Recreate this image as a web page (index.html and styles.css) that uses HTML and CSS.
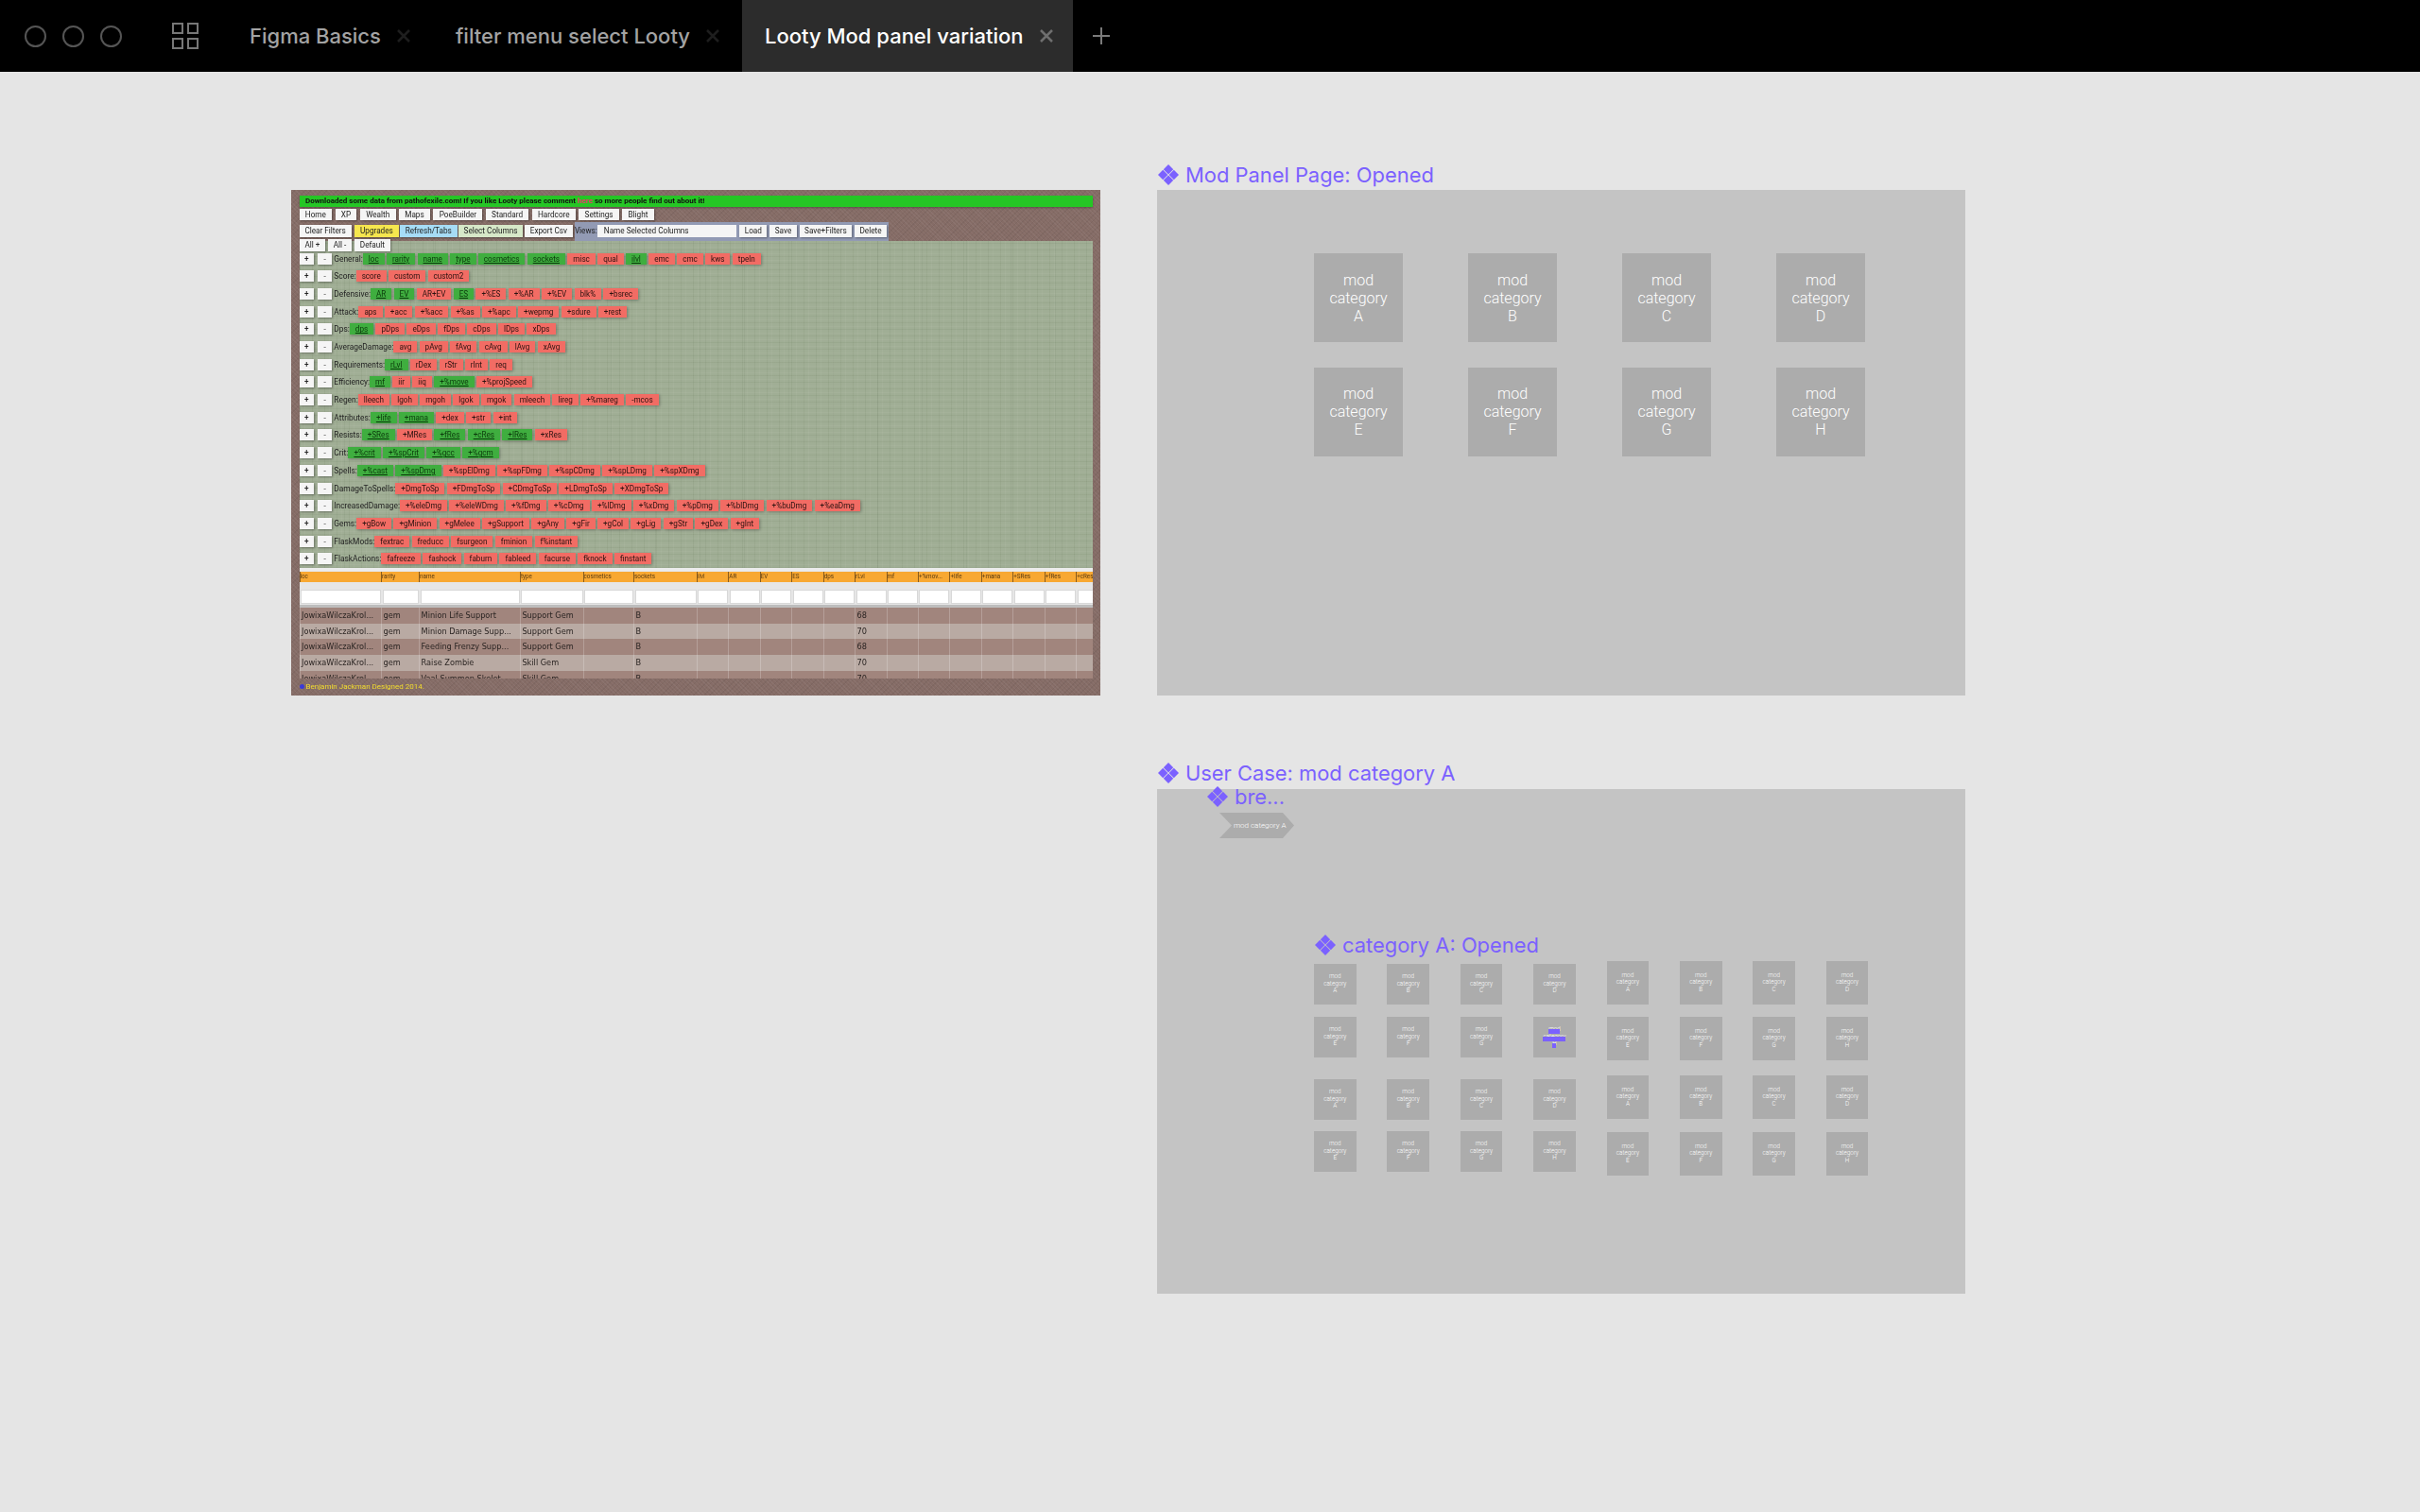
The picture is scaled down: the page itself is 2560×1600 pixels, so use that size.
FILE: index.html
```html
<!DOCTYPE html>
<html lang="en">
<head>
    <meta charset="utf-8">
    <title>Looty Mod panel variation</title>
    <link rel="stylesheet" href="styles.css">
</head>
<body>
    <svg class="defs" width="0" height="0">
        <symbol id="component" viewBox="0 0 22 22">
            <polygon points="11,0 16.2,5.2 11,10.4 5.8,5.2"/>
            <polygon points="11,11.6 16.2,16.8 11,22 5.8,16.8"/>
            <polygon points="5.2,5.8 10.4,11 5.2,16.2 0,11"/>
            <polygon points="16.8,5.8 22,11 16.8,16.2 11.6,11"/>
        </symbol>
    </svg>

    <header class="topbar">
        <div class="lights"><i></i><i></i><i></i></div>
        <div class="grid-icon"><i></i><i></i><i></i><i></i></div>
        <div class="tab">Figma Basics
            <svg class="close" viewBox="0 0 16 16"><path d="M2 2 14 14M14 2 2 14"/></svg>
        </div>
        <div class="tab">filter menu select Looty
            <svg class="close" viewBox="0 0 16 16"><path d="M2 2 14 14M14 2 2 14"/></svg>
        </div>
        <div class="tab active">Looty Mod panel variation
            <svg class="close" viewBox="0 0 16 16"><path d="M2 2 14 14M14 2 2 14"/></svg>
        </div>
        <svg class="plus" viewBox="0 0 18 18"><path d="M9 0V18M0 9H18"/></svg>
    </header>

    <main class="canvas">

        <!-- pasted screenshot of the Looty page -->
        <section class="looty">
            <div class="banner">Downloaded some data from pathofexile.com! If you like Looty please comment <span class="here">here</span> so more people find out about it!</div>
            <div class="btn-row nav-row">
                <span class="btn">Home</span><span class="btn">XP</span><span class="btn">Wealth</span><span class="btn">Maps</span><span class="btn">PoeBuilder</span><span class="btn">Standard</span><span class="btn">Hardcore</span><span class="btn">Settings</span><span class="btn">Blight</span>
            </div>
            <div class="btn-row tool-row">
                <span class="btn">Clear Filters</span>
                <span class="btn yellow">Upgrades</span>
                <span class="btn blue">Refresh/Tabs</span>
                <span class="btn pale">Select Columns</span>
                <span class="btn export">Export Csv</span>
                <div class="views">
                    <span class="views-label">Views:</span>
                    <span class="views-input">Name Selected Columns</span>
                    <span class="btn">Load</span><span class="btn">Save</span><span class="btn">Save+Filters</span><span class="btn">Delete</span>
                </div>
            </div>

            <div class="filters">
                <div class="btn-row all-row">
                    <span class="btn">All +</span><span class="btn">All -</span><span class="btn">Default</span>
                </div>
                <div class="filter-row"><span class="btn pm">+</span><span class="btn pm minus">-</span><span class="filter-label">General:</span><span class="tag on">loc</span><span class="tag on">rarity</span><span class="tag on">name</span><span class="tag on">type</span><span class="tag on">cosmetics</span><span class="tag on">sockets</span><span class="tag">misc</span><span class="tag">qual</span><span class="tag on">ilvl</span><span class="tag">emc</span><span class="tag">cmc</span><span class="tag">kws</span><span class="tag">tpeln</span></div>
                <div class="filter-row"><span class="btn pm">+</span><span class="btn pm minus">-</span><span class="filter-label">Score:</span><span class="tag">score</span><span class="tag">custom</span><span class="tag">custom2</span></div>
                <div class="filter-row"><span class="btn pm">+</span><span class="btn pm minus">-</span><span class="filter-label">Defensive:</span><span class="tag on">AR</span><span class="tag on">EV</span><span class="tag">AR+EV</span><span class="tag on">ES</span><span class="tag">+%ES</span><span class="tag">+%AR</span><span class="tag">+%EV</span><span class="tag">blk%</span><span class="tag">+bsrec</span></div>
                <div class="filter-row"><span class="btn pm">+</span><span class="btn pm minus">-</span><span class="filter-label">Attack:</span><span class="tag">aps</span><span class="tag">+acc</span><span class="tag">+%acc</span><span class="tag">+%as</span><span class="tag">+%apc</span><span class="tag">+wepmg</span><span class="tag">+sdure</span><span class="tag">+rest</span></div>
                <div class="filter-row"><span class="btn pm">+</span><span class="btn pm minus">-</span><span class="filter-label">Dps:</span><span class="tag on">dps</span><span class="tag">pDps</span><span class="tag">eDps</span><span class="tag">fDps</span><span class="tag">cDps</span><span class="tag">lDps</span><span class="tag">xDps</span></div>
                <div class="filter-row"><span class="btn pm">+</span><span class="btn pm minus">-</span><span class="filter-label">AverageDamage:</span><span class="tag">avg</span><span class="tag">pAvg</span><span class="tag">fAvg</span><span class="tag">cAvg</span><span class="tag">lAvg</span><span class="tag">xAvg</span></div>
                <div class="filter-row"><span class="btn pm">+</span><span class="btn pm minus">-</span><span class="filter-label">Requirements:</span><span class="tag on">rLvl</span><span class="tag">rDex</span><span class="tag">rStr</span><span class="tag">rInt</span><span class="tag">req</span></div>
                <div class="filter-row"><span class="btn pm">+</span><span class="btn pm minus">-</span><span class="filter-label">Efficiency:</span><span class="tag on">mf</span><span class="tag">iir</span><span class="tag">iiq</span><span class="tag on">+%move</span><span class="tag">+%projSpeed</span></div>
                <div class="filter-row"><span class="btn pm">+</span><span class="btn pm minus">-</span><span class="filter-label">Regen:</span><span class="tag">lleech</span><span class="tag">lgoh</span><span class="tag">mgoh</span><span class="tag">lgok</span><span class="tag">mgok</span><span class="tag">mleech</span><span class="tag">lireg</span><span class="tag">+%mareg</span><span class="tag">-mcos</span></div>
                <div class="filter-row"><span class="btn pm">+</span><span class="btn pm minus">-</span><span class="filter-label">Attributes:</span><span class="tag on">+life</span><span class="tag on">+mana</span><span class="tag">+dex</span><span class="tag">+str</span><span class="tag">+int</span></div>
                <div class="filter-row"><span class="btn pm">+</span><span class="btn pm minus">-</span><span class="filter-label">Resists:</span><span class="tag on">+SRes</span><span class="tag">+MRes</span><span class="tag on">+fRes</span><span class="tag on">+cRes</span><span class="tag on">+lRes</span><span class="tag">+xRes</span></div>
                <div class="filter-row"><span class="btn pm">+</span><span class="btn pm minus">-</span><span class="filter-label">Crit:</span><span class="tag on">+%crit</span><span class="tag on">+%spCrit</span><span class="tag on">+%gcc</span><span class="tag on">+%gcm</span></div>
                <div class="filter-row"><span class="btn pm">+</span><span class="btn pm minus">-</span><span class="filter-label">Spells:</span><span class="tag on">+%cast</span><span class="tag on">+%spDmg</span><span class="tag">+%spElDmg</span><span class="tag">+%spFDmg</span><span class="tag">+%spCDmg</span><span class="tag">+%spLDmg</span><span class="tag">+%spXDmg</span></div>
                <div class="filter-row"><span class="btn pm">+</span><span class="btn pm minus">-</span><span class="filter-label">DamageToSpells:</span><span class="tag">+DmgToSp</span><span class="tag">+FDmgToSp</span><span class="tag">+CDmgToSp</span><span class="tag">+LDmgToSp</span><span class="tag">+XDmgToSp</span></div>
                <div class="filter-row"><span class="btn pm">+</span><span class="btn pm minus">-</span><span class="filter-label">IncreasedDamage:</span><span class="tag">+%eleDmg</span><span class="tag">+%eleWDmg</span><span class="tag">+%fDmg</span><span class="tag">+%cDmg</span><span class="tag">+%lDmg</span><span class="tag">+%xDmg</span><span class="tag">+%pDmg</span><span class="tag">+%blDmg</span><span class="tag">+%buDmg</span><span class="tag">+%eaDmg</span></div>
                <div class="filter-row"><span class="btn pm">+</span><span class="btn pm minus">-</span><span class="filter-label">Gems:</span><span class="tag">+gBow</span><span class="tag">+gMinion</span><span class="tag">+gMelee</span><span class="tag">+gSupport</span><span class="tag">+gAny</span><span class="tag">+gFir</span><span class="tag">+gCol</span><span class="tag">+gLig</span><span class="tag">+gStr</span><span class="tag">+gDex</span><span class="tag">+gInt</span></div>
                <div class="filter-row"><span class="btn pm">+</span><span class="btn pm minus">-</span><span class="filter-label">FlaskMods:</span><span class="tag">fextrac</span><span class="tag">freducc</span><span class="tag">fsurgeon</span><span class="tag">fminion</span><span class="tag">f%instant</span></div>
                <div class="filter-row"><span class="btn pm">+</span><span class="btn pm minus">-</span><span class="filter-label">FlaskActions:</span><span class="tag">fafreeze</span><span class="tag">fashock</span><span class="tag">faburn</span><span class="tag">fableed</span><span class="tag">facurse</span><span class="tag">fknock</span><span class="tag">finstant</span></div>
            </div>

            <div class="table">
                <div class="cols head">
                    <span>loc</span><span>rarity</span><span>name</span><span>type</span><span>cosmetics</span><span>sockets</span><span>ilvl</span><span>AR</span><span>EV</span><span>ES</span><span>dps</span><span>rLvl</span><span>mf</span><span>+%mov...</span><span>+life</span><span>+mana</span><span>+SRes</span><span>+fRes</span><span>+cRes</span>
                </div>
                <div class="cols inputs">
                    <span></span><span></span><span></span><span></span><span></span><span></span><span></span><span></span><span></span><span></span><span></span><span></span><span></span><span></span><span></span><span></span><span></span><span></span><span></span>
                </div>
                <div class="cols item">
                    <span>JowixaWilczaKrol...</span><span>gem</span><span>Minion Life Support</span><span>Support Gem</span><span></span><span>B</span><span></span><span></span><span></span><span></span><span></span><span>68</span><span></span><span></span><span></span><span></span><span></span><span></span><span></span>
                </div>
                <div class="cols item">
                    <span>JowixaWilczaKrol...</span><span>gem</span><span>Minion Damage Supp...</span><span>Support Gem</span><span></span><span>B</span><span></span><span></span><span></span><span></span><span></span><span>70</span><span></span><span></span><span></span><span></span><span></span><span></span><span></span>
                </div>
                <div class="cols item">
                    <span>JowixaWilczaKrol...</span><span>gem</span><span>Feeding Frenzy Supp...</span><span>Support Gem</span><span></span><span>B</span><span></span><span></span><span></span><span></span><span></span><span>68</span><span></span><span></span><span></span><span></span><span></span><span></span><span></span>
                </div>
                <div class="cols item">
                    <span>JowixaWilczaKrol...</span><span>gem</span><span>Raise Zombie</span><span>Skill Gem</span><span></span><span>B</span><span></span><span></span><span></span><span></span><span></span><span>70</span><span></span><span></span><span></span><span></span><span></span><span></span><span></span>
                </div>
                <div class="cols item">
                    <span>JowixaWilczaKrol...</span><span>gem</span><span>Vaal Summon Skelet...</span><span>Skill Gem</span><span></span><span>B</span><span></span><span></span><span></span><span></span><span></span><span>70</span><span></span><span></span><span></span><span></span><span></span><span></span><span></span>
                </div>
            </div>
            <div class="credit"><i class="credit-dot"></i>Benjamin Jackman Designed 2014.</div>
        </section>

        <!-- frame 1 -->
        <h3 class="frame-name name-opened"><svg class="comp"><use href="#component"/></svg>Mod Panel Page: Opened</h3>
        <section class="frame frame-opened">
            <div class="big-grid">
                <div class="tile">mod<br>category<br>A</div>
                <div class="tile">mod<br>category<br>B</div>
                <div class="tile">mod<br>category<br>C</div>
                <div class="tile">mod<br>category<br>D</div>
                <div class="tile">mod<br>category<br>E</div>
                <div class="tile">mod<br>category<br>F</div>
                <div class="tile">mod<br>category<br>G</div>
                <div class="tile">mod<br>category<br>H</div>
            </div>
        </section>

        <!-- frame 2 -->
        <h3 class="frame-name name-case"><svg class="comp"><use href="#component"/></svg>User Case: mod category A</h3>
        <section class="frame frame-case">
            <h3 class="frame-name name-bread"><svg class="comp"><use href="#component"/></svg>bre...</h3>
            <div class="chevron">mod category A</div>
            <h3 class="frame-name name-cat"><svg class="comp"><use href="#component"/></svg>category A: Opened</h3>
            <div class="small-sets">
                <div class="small-set set-left">
                    <div class="small-row">
                        <div class="mini">mod<br>category<br>A</div><div class="mini">mod<br>category<br>B</div><div class="mini">mod<br>category<br>C</div><div class="mini">mod<br>category<br>D</div>
                    </div>
                    <div class="small-row">
                        <div class="mini">mod<br>category<br>E</div><div class="mini">mod<br>category<br>F</div><div class="mini">mod<br>category<br>G</div>
                        <div class="mini picked">mod<br>category<br>H
                            <div class="picked-bars"><i class="bar-a"></i><i class="bar-b"></i><i class="bar-c"></i></div>
                        </div>
                    </div>
                    <div class="small-row">
                        <div class="mini">mod<br>category<br>A</div><div class="mini">mod<br>category<br>B</div><div class="mini">mod<br>category<br>C</div><div class="mini">mod<br>category<br>D</div>
                    </div>
                    <div class="small-row">
                        <div class="mini">mod<br>category<br>E</div><div class="mini">mod<br>category<br>F</div><div class="mini">mod<br>category<br>G</div><div class="mini">mod<br>category<br>H</div>
                    </div>
                </div>
                <div class="small-set set-right">
                    <div class="small-row">
                        <div class="mini">mod<br>category<br>A</div><div class="mini">mod<br>category<br>B</div><div class="mini">mod<br>category<br>C</div><div class="mini">mod<br>category<br>D</div>
                    </div>
                    <div class="small-row">
                        <div class="mini">mod<br>category<br>E</div><div class="mini">mod<br>category<br>F</div><div class="mini">mod<br>category<br>G</div><div class="mini">mod<br>category<br>H</div>
                    </div>
                    <div class="small-row">
                        <div class="mini">mod<br>category<br>A</div><div class="mini">mod<br>category<br>B</div><div class="mini">mod<br>category<br>C</div><div class="mini">mod<br>category<br>D</div>
                    </div>
                    <div class="small-row">
                        <div class="mini">mod<br>category<br>E</div><div class="mini">mod<br>category<br>F</div><div class="mini">mod<br>category<br>G</div><div class="mini">mod<br>category<br>H</div>
                    </div>
                </div>
            </div>
        </section>
    </main>
</body>
</html>
```

FILE: styles.css
```css
* {
    box-sizing: border-box;
}
body {
    margin: 0;
    height: 1600px;
    overflow: hidden;
    background-color: #e5e5e5;
    font-family: Inter, "Liberation Sans", sans-serif;
}
.defs {
    position: absolute;
}

/* Top bar */
.topbar {
    display: flex;
    align-items: stretch;
    height: 76px;
    background-color: #000;
    font-size: 22px;
    font-weight: 500;
    color: #a3a3a3;
}
.lights {
    display: flex;
    align-items: center;
    gap: 17px;
    margin-left: 26px;
}
.lights i {
    width: 23px;
    height: 23px;
    border: 2px solid #555;
    border-radius: 50%;
}
.grid-icon {
    display: grid;
    grid-template-columns: 12px 12px;
    grid-auto-rows: 12px;
    gap: 4px;
    align-self: center;
    margin-left: 53px;
    margin-right: 30px;
}
.grid-icon i {
    border: 2px solid #777;
}
.tab {
    display: flex;
    align-items: center;
    padding: 0 23px 0 24px;
    white-space: nowrap;
}
.tab.active {
    padding-right: 20px;
    background-color: #2c2c2c;
    color: #fff;
}
.close {
    width: 16px;
    height: 16px;
    margin-left: 16px;
    fill: none;
    stroke: #1e1e1e;
    stroke-width: 2.5;
}
.tab.active .close {
    stroke: #6f6f6f;
}
.plus {
    align-self: center;
    width: 18px;
    height: 18px;
    margin-left: 21px;
    fill: none;
    stroke: #7a7a7a;
    stroke-width: 2;
}

/* Free canvas */
.canvas {
    position: relative;
    height: 1524px;
}
.frame {
    position: absolute;
    left: 1224px;
    width: 855px;
    background-color: #c4c4c4;
}
.frame-opened {
    top: 125px;
    height: 535px;
    padding: 67px 0 0 166px;
}
.frame-case {
    top: 759px;
    height: 534px;
}
.frame-name {
    position: absolute;
    display: flex;
    align-items: center;
    gap: 7px;
    height: 30px;
    margin: 0;
    font-size: 21.9px;
    font-weight: 400;
    line-height: 30px;
    color: #7b61ff;
    white-space: nowrap;
}
.comp {
    width: 22px;
    height: 22px;
    fill: #7b61ff;
}
.name-opened {
    top: 94px;
    left: 1225px;
}
.name-case {
    top: 727px;
    left: 1225px;
}
.name-bread {
    top: -7px;
    left: 53px;
}
.name-cat {
    top: 150px;
    left: 167px;
}
.big-grid {
    display: grid;
    grid-template-columns: repeat(4, 94px);
    grid-auto-rows: 94px;
    column-gap: 69px;
    row-gap: 26.5px;
}
.tile {
    display: flex;
    align-items: center;
    justify-content: center;
    text-align: center;
    background-color: #acacac;
    font-family: Roboto, sans-serif;
    font-size: 16px;
    font-weight: 300;
    line-height: 19px;
    color: #fff;
}
.chevron {
    position: absolute;
    top: 25px;
    left: 66px;
    width: 79px;
    height: 27px;
    padding-left: 15px;
    background-color: #acacac;
    clip-path: polygon(0 0, 67px 0, 100% 50%, 67px 100%, 0 100%, 13px 50%);
    font-family: Roboto, sans-serif;
    font-size: 8px;
    font-weight: 300;
    line-height: 27px;
    color: #fff;
    white-space: nowrap;
}

/* Small tiles */
.small-sets {
    position: absolute;
    top: 182px;
    left: 166px;
    display: flex;
    gap: 32.8px;
}
.small-set {
    display: flex;
    flex-direction: column;
}
.small-row {
    display: flex;
    gap: 32.8px;
}
.set-left {
    padding-top: 3px;
}
.set-left .small-row:nth-child(2) { margin-top: 13px; }
.set-left .small-row:nth-child(3) { margin-top: 23px; }
.set-left .small-row:nth-child(4) { margin-top: 12px; }
.set-right .small-row:nth-child(2) { margin-top: 13px; }
.set-right .small-row:nth-child(3) { margin-top: 16px; }
.set-right .small-row:nth-child(4) { margin-top: 14px; }
.mini {
    position: relative;
    display: flex;
    align-items: center;
    justify-content: center;
    width: 44.6px;
    height: 43px;
    text-align: center;
    background-color: #acacac;
    font-family: Roboto, sans-serif;
    font-size: 6.3px;
    font-weight: 300;
    line-height: 7.4px;
    color: #fff;
}
.set-right .mini {
    height: 46px;
}
.picked-bars {
    position: absolute;
    top: 13px;
    left: 0;
    right: 0;
    display: flex;
    flex-direction: column;
    align-items: center;
}
.picked-bars i {
    height: 5px;
    background-color: #7b61ff;
}
.bar-a { width: 12px; }
.bar-b { width: 24px; margin-top: 3px; }
.bar-c { width: 4px; margin-top: 2px; }

/* Looty screenshot */
.looty {
    position: absolute;
    top: 125px;
    left: 308px;
    width: 856px;
    height: 535px;
    padding: 6px 8.5px 0;
    overflow: hidden;
    background-color: #856c66;
    background-image:
        repeating-linear-gradient(45deg, rgba(255, 255, 255, .05) 0 1px, transparent 1px 3px),
        repeating-linear-gradient(-45deg, rgba(0, 0, 0, .05) 0 1px, transparent 1px 4px);
    font-family: Roboto, sans-serif;
    font-size: 8.2px;
    color: #222;
    filter: blur(.4px);
}
.banner {
    height: 12px;
    padding-left: 6.5px;
    background-color: #25c625;
    box-shadow: 0 1px 2px rgba(0, 0, 0, .3);
    font-size: 8px;
    font-weight: 700;
    line-height: 12px;
    color: #111;
    white-space: nowrap;
}
.here {
    color: #f0346c;
}
.btn-row {
    display: flex;
    gap: 3.4px;
}
.nav-row {
    margin-top: 2px;
}
.nav-row .btn {
    padding: 0 6.3px;
}
.tool-row {
    margin-top: 5px;
    height: 16.4px;
}
.btn {
    display: block;
    height: 12.3px;
    padding: 0 5.9px;
    background-color: #f5f5f5;
    box-shadow: 1px 1px 2px rgba(0, 0, 0, .35);
    line-height: 12.3px;
    white-space: nowrap;
}
.yellow { background-color: #f6e64e; }
.blue { background-color: #a6dcf6; margin-left: -2.3px; }
.pale { background-color: #d6e8c8; margin-left: -2.4px; }
.export { margin-left: -1.9px; }
.views {
    display: flex;
    gap: 3.2px;
    height: 19.3px;
    margin: -3px 0 0 -1.4px;
    padding: 3px 1.7px 0 0;
    background-color: #929ab4;
}
.views .btn {
    padding: 0 5.3px;
}
.views-label {
    margin-right: -3.2px;
    line-height: 12.3px;
}
.views-input {
    width: 147.5px;
    height: 12.3px;
    padding-left: 7px;
    background-color: #f5f5f5;
    line-height: 12.3px;
}
.filters {
    height: 346.3px;
    background-color: #a0ae95;
    background-image:
        repeating-linear-gradient(0deg, rgba(60, 80, 50, .07) 0 1px, transparent 1px 3px, rgba(255, 255, 255, .04) 3px 4px, transparent 4px 7px),
        repeating-linear-gradient(90deg, rgba(60, 80, 50, .07) 0 1px, transparent 1px 5px, rgba(255, 255, 255, .04) 5px 6px, transparent 6px 13px),
        repeating-linear-gradient(90deg, rgba(50, 70, 40, .06) 0 1px, transparent 1px 47px);
}
.all-row {
    position: relative;
    top: -1.4px;
    height: 12.3px;
    gap: 2.6px;
}
.filter-row {
    display: flex;
    align-items: flex-start;
    height: 12px;
    white-space: nowrap;
}
.all-row + .filter-row {
    margin-top: .6px;
}
.filter-row + .filter-row {
    margin-top: 6.7px;
}
.pm {
    width: 15.6px;
    height: 12px;
    padding: 0;
    text-align: center;
    font-weight: 500;
}
.minus {
    margin-left: 3.8px;
    color: #777;
}
.filter-label {
    margin-left: 1.8px;
    font-size: 8.4px;
    line-height: 12px;
}
.tag {
    height: 12px;
    margin-right: 2.3px;
    padding: 0 6px;
    background-color: #f26c64;
    box-shadow: 1px 1px 3px rgba(0, 0, 0, .3);
    font-size: 8.15px;
    line-height: 12px;
    color: #2b1210;
}
.tag.on {
    background-color: #3fae3f;
    color: #0c3a0c;
    text-decoration: underline;
}

/* Looty table */
.table {
    height: 117px;
    padding-top: 4px;
    overflow: hidden;
    background-color: #ececec;
}
.cols {
    display: grid;
    grid-template-columns: 86.6px 40px 106.8px 66.7px 53.5px 66.8px repeat(13, 33.45px);
}
.cols span {
    overflow: hidden;
    border-left: 1px solid rgba(255, 255, 255, .22);
    white-space: nowrap;
}
.head {
    height: 11px;
    background-color: #f8a832;
    box-shadow: 0 1px 2px rgba(0, 0, 0, .3);
    font-size: 6.3px;
    line-height: 11px;
    color: #5a3a10;
}
.head span {
    border-left-color: rgba(90, 60, 20, .7);
}
.inputs {
    height: 27px;
    padding-top: 8.5px;
    background-color: #e6e6e6;
    border-bottom: 3px solid #bdbdbd;
}
.inputs span {
    height: 14.5px;
    margin-left: 1.5px;
    background-color: #fff;
    border: 1px solid #d8d8d8;
}
.item {
    height: 16.7px;
    font-family: "DejaVu Sans", sans-serif;
    font-size: 8.2px;
    line-height: 16.7px;
    color: #2a2422;
    background-color: #a1857d;
}
.item:nth-child(even) {
    background-color: #b9aaa3;
}
.item span {
    padding-left: 1.5px;
}
.credit {
    display: flex;
    align-items: center;
    height: 18px;
    font-size: 8px;
    color: #f2dc2e;
}
.credit-dot {
    width: 5px;
    height: 5px;
    margin-right: 2px;
    border-radius: 50%;
    background-color: #3a3ad8;
}
```
